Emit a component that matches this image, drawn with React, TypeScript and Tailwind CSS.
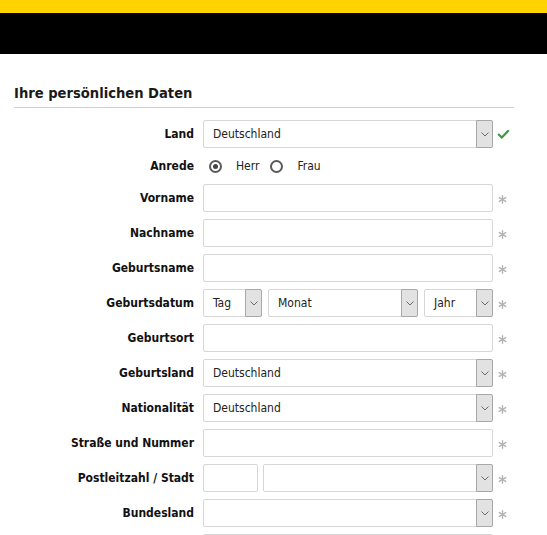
import React from 'react'

const Chevron = () => (
  <svg width="8" height="5" viewBox="0 0 8 5" className="block">
    <polyline points="0.5,0.5 4,4 7.5,0.5" fill="none" stroke="#6b6b6b" strokeWidth="1" />
  </svg>
)

const Star = () => (
  <svg width="9" height="9" viewBox="0 0 9 9" className="block mt-[3px]">
    <g stroke="#b3b3b3" strokeWidth="1.4" strokeLinecap="round">
      <line x1="4.5" y1="0.8" x2="4.5" y2="8.2" />
      <line x1="1.3" y1="2.6" x2="7.7" y2="6.4" />
      <line x1="1.3" y1="6.4" x2="7.7" y2="2.6" />
    </g>
  </svg>
)

const Check = () => (
  <svg width="13" height="10" viewBox="0 0 13 10" className="block">
    <polyline points="1.2,5 4.8,8.5 11.8,1.2" fill="none" stroke="#3b9a3b" strokeWidth="2.2" />
  </svg>
)

const Select = ({ value = '', className = '' }: { value?: string; className?: string }) => (
  <div className={`flex h-7 border border-[#d6d6d6] rounded-[2px] bg-white ${className}`}>
    <span className="flex-1 pl-[9px] leading-[26px] text-[12px] text-[#222] truncate">{value}</span>
    <span className="w-[17px] -my-px -mr-px border border-[#a8a8a8] rounded-r-[2px] bg-[#e2e2e2] flex items-center justify-center">
      <Chevron />
    </span>
  </div>
)

const Input = ({ className = '' }: { className?: string }) => (
  <div className={`h-7 border border-[#d6d6d6] rounded-[2px] bg-white ${className}`} />
)

const Row = ({ label, children, mark = 'star' }: { label: string; children: React.ReactNode; mark?: 'star' | 'check' | 'none' }) => (
  <div className="flex items-center">
    <div className="w-[180px] text-right font-bold text-[12px] text-[#111]">{label}</div>
    <div className="ml-[9px] w-[290px] flex gap-[6px]">{children}</div>
    <div className="ml-[4px] w-4 flex items-center">
      {mark === 'star' && <span className="ml-[1px]"><Star /></span>}
      {mark === 'check' && <Check />}
    </div>
  </div>
)

const Radio = ({ checked }: { checked?: boolean }) => (
  <span className="w-[13px] h-[13px] rounded-full border-2 border-[#5a5a5a] bg-white flex items-center justify-center">
    {checked && <span className="w-[5px] h-[5px] rounded-full bg-[#444]" />}
  </span>
)

export default function App() {
  return (
    <div className="min-h-screen bg-white font-['DejaVu_Sans_Condensed','Noto_Sans',sans-serif]">
      <div className="h-[13px] bg-[#ffd400]" />
      <div className="h-[41px] bg-black" />
      <div className="ml-[14px] w-[500px]">
        <div className="mt-[30px] pb-[5px] border-b border-[#d2d2d2]">
          <h2 className="text-[14.6px] leading-[18px] font-bold text-[#1a1a1a]">Ihre persönlichen Daten</h2>
        </div>
        <div className="mt-[12px] flex flex-col gap-[7px]">
          <Row label="Land" mark="check">
            <Select value="Deutschland" className="flex-1" />
          </Row>
          <div className="flex items-center h-[22px]">
            <div className="w-[180px] text-right font-bold text-[12px] text-[#111]">Anrede</div>
            <div className="ml-[15px] flex items-center text-[12px] text-[#222]">
              <Radio checked />
              <span className="ml-[14px]">Herr</span>
              <span className="ml-[11px]"><Radio /></span>
              <span className="ml-[14px]">Frau</span>
            </div>
          </div>
          <Row label="Vorname"><Input className="flex-1" /></Row>
          <Row label="Nachname"><Input className="flex-1" /></Row>
          <Row label="Geburtsname"><Input className="flex-1" /></Row>
          <Row label="Geburtsdatum">
            <Select value="Tag" className="w-[59px]" />
            <Select value="Monat" className="flex-1" />
            <Select value="Jahr" className="w-[69px]" />
          </Row>
          <Row label="Geburtsort"><Input className="flex-1" /></Row>
          <Row label="Geburtsland"><Select value="Deutschland" className="flex-1" /></Row>
          <Row label="Nationalität"><Select value="Deutschland" className="flex-1" /></Row>
          <Row label="Straße und Nummer"><Input className="flex-1" /></Row>
          <Row label="Postleitzahl / Stadt">
            <Input className="w-[55px]" />
            <Select className="flex-1 -ml-px" />
          </Row>
          <Row label="Bundesland"><Select className="flex-1" /></Row>
          <Row label="" mark="none"><Input className="flex-1" /></Row>
        </div>
      </div>
    </div>
  )
}
